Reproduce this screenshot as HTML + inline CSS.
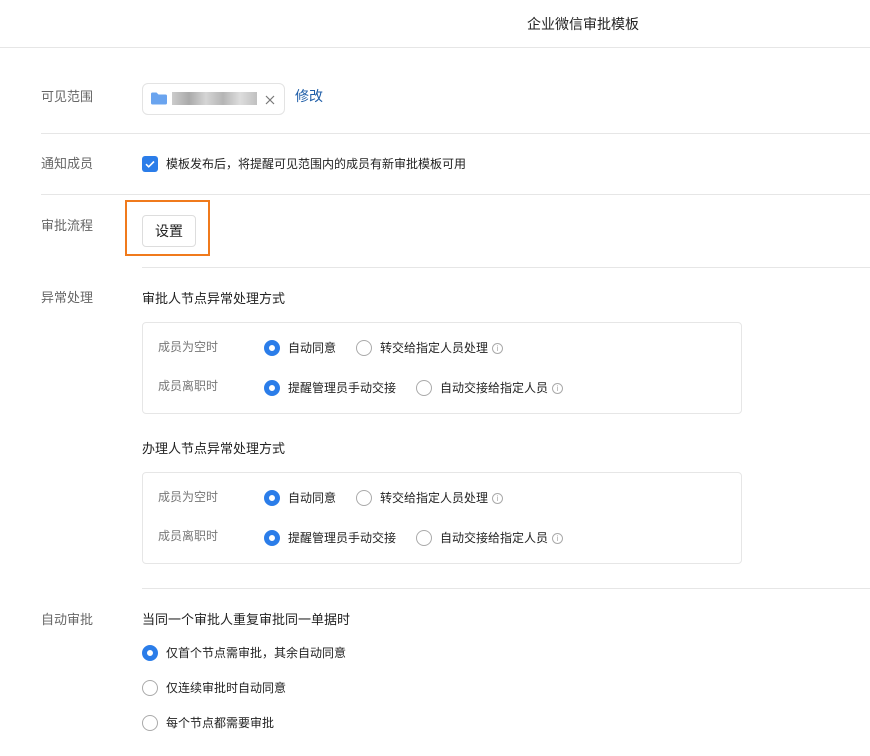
<!DOCTYPE html><html><head><meta charset="utf-8"><style>
*{margin:0;padding:0;box-sizing:border-box}
body{width:870px;height:756px;background:#fff;font-family:"Liberation Sans","Noto Sans CJK SC",sans-serif;position:relative;overflow:hidden;color:#222}
.a{position:absolute;white-space:nowrap;line-height:1}
.lbl{font-size:13px;color:#666;left:41px}
.hl{position:absolute;height:1px;background:#e6e6e6}
.box{position:absolute;left:142px;width:600px;height:92px;border:1px solid #e6e6e6;border-radius:4px}
.rl{font-size:12px;color:#777}
.t{font-size:12px;color:#222}
.r{position:absolute;width:16px;height:16px;border-radius:50%;border:1px solid #aaa;background:#fff}
.r.on{border:5px solid #2b7de9}
.i{position:absolute;width:11px;height:11px;border:1px solid #aaa;border-radius:50%;font-size:8px;color:#aaa;text-align:center;line-height:9px}
</style></head><body>
<div class="a" style="left:527px;top:17px;font-size:14px;color:#222">企业微信审批模板</div>
<div class="hl" style="left:0;top:47px;width:870px"></div>
<div class="a lbl" style="top:90px">可见范围</div>
<div style="position:absolute;left:142px;top:83px;width:143px;height:32px;border:1px solid #e3e3e3;border-radius:6px"></div>
<svg style="position:absolute;left:151px;top:92px" width="16" height="13"><path d="M0 2a1.5 1.5 0 0 1 1.5-1.5h4l2 2h7a1.5 1.5 0 0 1 1.5 1.5v7a1.5 1.5 0 0 1-1.5 1.5h-13A1.5 1.5 0 0 1 0 11z" fill="#6aa4ef"/></svg>
<div style="position:absolute;left:172px;top:92px;width:85px;height:13px;background:linear-gradient(90deg,#ccc,#aaa 20%,#d5d5d5 40%,#b5b5b5 60%,#ddd 80%,#c0c0c0)"></div>
<svg style="position:absolute;left:265px;top:95px" width="10" height="10"><path d="M1 1l8 8M9 1l-8 8" stroke="#777" stroke-width="1.2"/></svg>
<div class="a" style="left:295px;top:89px;font-size:14px;color:#1f5ea8">修改</div>
<div class="hl" style="left:41px;top:133px;width:829px"></div>
<div class="a lbl" style="top:157px">通知成员</div>
<div style="position:absolute;left:142px;top:156px;width:16px;height:16px;background:#2b7de9;border-radius:3px"><svg width="16" height="16"><path d="M4 8.2l2.7 2.6L12 5.5" stroke="#fff" stroke-width="1.6" fill="none"/></svg></div>
<div class="a" style="left:166px;top:158px;font-size:12px">模板发布后，将提醒可见范围内的成员有新审批模板可用</div>
<div class="hl" style="left:41px;top:194px;width:829px"></div>
<div class="a lbl" style="top:219px">审批流程</div>
<div style="position:absolute;left:125px;top:200px;width:85px;height:56px;border:2px solid #f07a1c"></div>
<div style="position:absolute;left:142px;top:215px;width:54px;height:32px;border:1px solid #ddd;border-radius:4px;font-size:14px;text-align:center;line-height:30px">设置</div>
<div class="hl" style="left:142px;top:267px;width:728px"></div>
<div class="a lbl" style="top:291px">异常处理</div>
<div class="a" style="left:142px;top:292px;font-size:13px">审批人节点异常处理方式</div>
<div class="box" style="top:322px"></div>
<div class="a rl" style="left:158px;top:341px">成员为空时</div>
<div class="r on" style="left:264px;top:340px"></div><div class="a t" style="left:288px;top:342px">自动同意</div>
<div class="r" style="left:356px;top:340px"></div><div class="a t" style="left:380px;top:342px">转交给指定人员处理</div><div class="i" style="left:492px;top:343px">i</div>
<div class="a rl" style="left:158px;top:380px">成员离职时</div>
<div class="r on" style="left:264px;top:380px"></div><div class="a t" style="left:288px;top:382px">提醒管理员手动交接</div>
<div class="r" style="left:416px;top:380px"></div><div class="a t" style="left:440px;top:382px">自动交接给指定人员</div><div class="i" style="left:552px;top:383px">i</div>
<div class="a" style="left:142px;top:442px;font-size:13px">办理人节点异常处理方式</div>
<div class="box" style="top:472px"></div>
<div class="a rl" style="left:158px;top:491px">成员为空时</div>
<div class="r on" style="left:264px;top:490px"></div><div class="a t" style="left:288px;top:492px">自动同意</div>
<div class="r" style="left:356px;top:490px"></div><div class="a t" style="left:380px;top:492px">转交给指定人员处理</div><div class="i" style="left:492px;top:493px">i</div>
<div class="a rl" style="left:158px;top:530px">成员离职时</div>
<div class="r on" style="left:264px;top:530px"></div><div class="a t" style="left:288px;top:532px">提醒管理员手动交接</div>
<div class="r" style="left:416px;top:530px"></div><div class="a t" style="left:440px;top:532px">自动交接给指定人员</div><div class="i" style="left:552px;top:533px">i</div>
<div class="hl" style="left:142px;top:588px;width:728px"></div>
<div class="a lbl" style="top:613px">自动审批</div>
<div class="a" style="left:142px;top:613px;font-size:13px">当同一个审批人重复审批同一单据时</div>
<div class="r on" style="left:142px;top:645px"></div><div class="a t" style="left:166px;top:647px">仅首个节点需审批，其余自动同意</div>
<div class="r" style="left:142px;top:680px"></div><div class="a t" style="left:166px;top:682px">仅连续审批时自动同意</div>
<div class="r" style="left:142px;top:715px"></div><div class="a t" style="left:166px;top:717px">每个节点都需要审批</div>
</body></html>
